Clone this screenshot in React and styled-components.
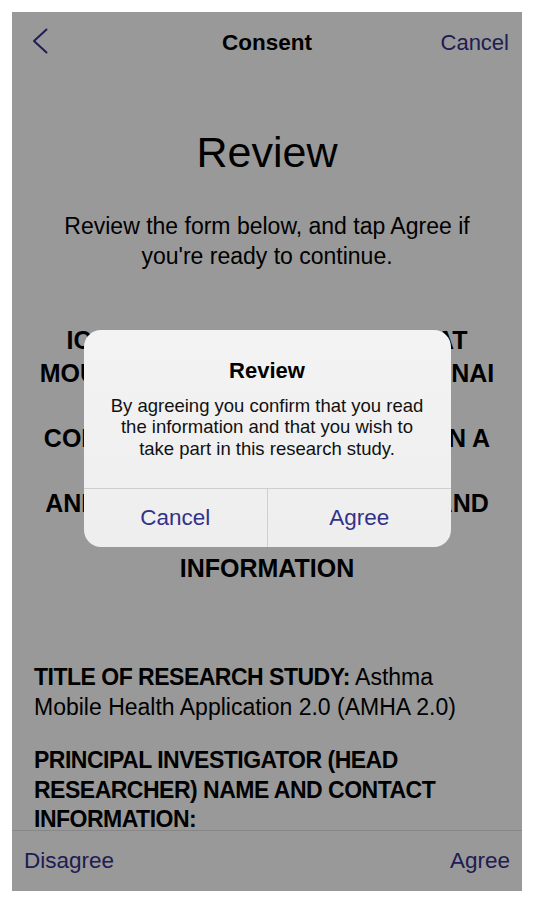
import React from 'react';
import styled, { createGlobalStyle } from 'styled-components';

const tint = '#34318a';

const GlobalStyle = createGlobalStyle`
  html, body {
    margin: 0;
    padding: 0;
    background: #ffffff;
  }
  body {
    font-family: "Liberation Sans", Arial, sans-serif;
    color: #000;
    -webkit-font-smoothing: antialiased;
  }
  * {
    box-sizing: border-box;
  }
`;

const Page = styled.div`
  padding: 12px;
`;

const Screen = styled.div`
  position: relative;
  width: 510px;
  height: 879px;
  background: #ffffff;
  display: flex;
  flex-direction: column;
  overflow: hidden;
`;

const NavBar = styled.div`
  height: 60px;
  flex-shrink: 0;
  display: grid;
  grid-template-columns: 1fr auto 1fr;
  align-items: center;
  padding: 0 13px;
`;

const BackButton = styled.div`
  justify-self: start;
  display: flex;
  align-items: center;
  margin: 0 0 2px 7px;
  color: ${tint};
`;

const NavTitle = styled.div`
  font-size: 22.5px;
  font-weight: 700;
  margin-top: 1px;
`;

const NavAction = styled.div`
  justify-self: end;
  font-size: 22px;
  color: ${tint};
  margin-top: 1px;
`;

const Content = styled.div`
  flex: 1;
  overflow: hidden;
  padding: 0 22px;
`;

const PageTitle = styled.h1`
  margin: 54px 0 0;
  font-size: 43px;
  line-height: 52px;
  font-weight: 400;
  text-align: center;
`;

const Intro = styled.p`
  margin: 33px 4px 0;
  font-size: 23px;
  line-height: 30px;
  text-align: center;
`;

const Heading = styled.div`
  margin: 53px -12px 0;
  font-size: 25px;
  line-height: 32.5px;
  font-weight: 700;
  text-align: center;
  white-space: nowrap;
`;

const Paragraph = styled.p`
  margin: ${(props) => props.gap || '24px'} 0 0;
  font-size: 23px;
  line-height: ${(props) => props.lh || '30px'};
  font-weight: ${(props) => (props.bold ? 700 : 400)};
  letter-spacing: ${(props) => (props.bold ? '-0.5px' : 'normal')};

  strong {
    font-weight: 700;
    letter-spacing: -0.5px;
  }
`;

const Toolbar = styled.div`
  height: 61px;
  flex-shrink: 0;
  border-top: 1px solid #e2e2e2;
  display: flex;
  align-items: center;
  justify-content: space-between;
  padding: 0 12px;
  font-size: 22.5px;
  color: ${tint};
`;

const Dim = styled.div`
  position: absolute;
  inset: 0;
  background: rgba(0, 0, 0, 0.4);
  display: flex;
  align-items: center;
  justify-content: center;
  padding-bottom: 27px;
`;

const Alert = styled.div`
  width: 367px;
  border-radius: 17px;
  background: linear-gradient(180deg, #f3f3f3 0%, #eeeeee 100%);
  overflow: hidden;
`;

const AlertBody = styled.div`
  padding: 26px 23px 28.5px;
  text-align: center;
`;

const AlertTitle = styled.div`
  font-size: 22px;
  line-height: 29px;
  font-weight: 700;
`;

const AlertMessage = styled.div`
  margin-top: 10px;
  font-size: 18.5px;
  line-height: 21.5px;
  color: #111;
`;

const AlertActions = styled.div`
  display: grid;
  grid-template-columns: 1fr 1fr;
  height: 59px;
  border-top: 1px solid #cfcfcf;
`;

const AlertButton = styled.div`
  display: flex;
  align-items: center;
  justify-content: center;
  font-size: 22.5px;
  color: ${tint};

  & + & {
    border-left: 1px solid #cfcfcf;
  }
`;

const ChevronLeft = () => (
  <svg width="16" height="26" viewBox="0 0 16 26" fill="none">
    <polyline
      points="14.5,1.5 2,13 14.5,24.5"
      stroke="currentColor"
      strokeWidth="2"
      strokeLinecap="round"
      strokeLinejoin="round"
    />
  </svg>
);

export default function App() {
  return (
    <Page>
      <GlobalStyle />
      <Screen>
        <NavBar>
          <BackButton>
            <ChevronLeft />
          </BackButton>
          <NavTitle>Consent</NavTitle>
          <NavAction>Cancel</NavAction>
        </NavBar>

        <Content>
          <PageTitle>Review</PageTitle>
          <Intro>
            Review the form below, and tap Agree if you're ready to continue.
          </Intro>
          <Heading>
            ICAHN SCHOOL OF MEDICINE AT
            <br />
            MOUNT SINAI HOSPITAL AT MT. SINAI
            <br />
            BETH ISRAEL
            <br />
            CONSENT FORM TO TAKE PART IN A
            <br />
            RESEARCH STUDY
            <br />
            AND AUTHORIZATION FOR USE AND
            <br />
            DISCLOSURE OF HEALTH
            <br />
            INFORMATION
          </Heading>
          <Paragraph gap="78px">
            <strong>TITLE OF RESEARCH STUDY:</strong> Asthma Mobile Health
            Application 2.0 (AMHA 2.0)
          </Paragraph>
          <Paragraph bold lh="29.5px">
            PRINCIPAL INVESTIGATOR (HEAD RESEARCHER) NAME AND CONTACT
            INFORMATION:
          </Paragraph>
        </Content>

        <Toolbar>
          <span>Disagree</span>
          <span>Agree</span>
        </Toolbar>

        <Dim>
          <Alert>
            <AlertBody>
              <AlertTitle>Review</AlertTitle>
              <AlertMessage>
                By agreeing you confirm that you read the information and that
                you wish to take part in this research study.
              </AlertMessage>
            </AlertBody>
            <AlertActions>
              <AlertButton>Cancel</AlertButton>
              <AlertButton>Agree</AlertButton>
            </AlertActions>
          </Alert>
        </Dim>
      </Screen>
    </Page>
  );
}
